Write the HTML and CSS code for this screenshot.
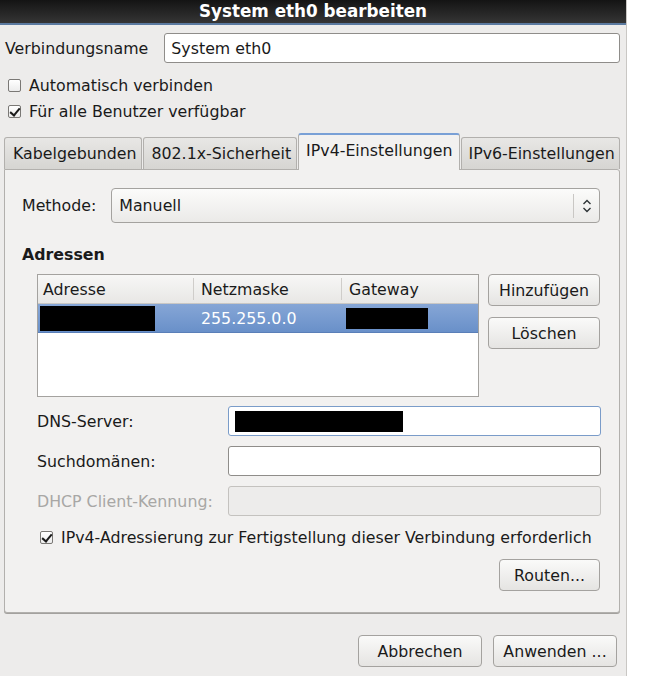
FILE: index.html
```html
<!DOCTYPE html>
<html lang="de">
<head>
    <meta charset="UTF-8">
    <title>System eth0 bearbeiten</title>
    <link rel="stylesheet" href="styles.css">
</head>
<body>
    <div class="dialog">
        <div class="titlebar">System eth0 bearbeiten</div>

        <div class="content">
            <div class="name-row">
                <label for="conn-name">Verbindungsname</label>
                <input type="text" id="conn-name" class="entry" value="System eth0">
            </div>

            <div class="check-row">
                <span class="checkbox"></span>
                <span>Automatisch verbinden</span>
            </div>
            <div class="check-row">
                <span class="checkbox checked"></span>
                <span>Für alle Benutzer verfügbar</span>
            </div>

            <div class="tabs">
                <div class="tab first">Kabelgebunden</div>
                <div class="tab">802.1x-Sicherheit</div>
                <div class="tab active">IPv4-Einstellungen</div>
                <div class="tab">IPv6-Einstellungen</div>
            </div>

            <div class="panel">
                <div class="method-row">
                    <span>Methode:</span>
                    <div class="combo">
                        <span class="combo-text">Manuell</span>
                        <span class="combo-arrow">
                            <svg width="10" height="14" viewBox="0 0 10 14">
                                <path d="M1.5 5 L5 1.5 L8.5 5 M1.5 9 L5 12.5 L8.5 9" fill="none" stroke="#2e3436" stroke-width="1.4"/>
                            </svg>
                        </span>
                    </div>
                </div>

                <div class="section-title">Adressen</div>

                <div class="addr-row">
                    <div class="addr-table">
                        <div class="thead">
                            <div class="col col-addr">Adresse</div>
                            <div class="col col-mask">Netzmaske</div>
                            <div class="col col-gw">Gateway</div>
                        </div>
                        <div class="trow selected">
                            <div class="col col-addr"><span class="redact redact-addr"></span></div>
                            <div class="col col-mask">255.255.0.0</div>
                            <div class="col col-gw"><span class="redact redact-gw"></span></div>
                        </div>
                    </div>
                    <div class="addr-buttons">
                        <button class="btn">Hinzufügen</button>
                        <button class="btn">Löschen</button>
                    </div>
                </div>

                <div class="form-grid">
                    <label>DNS-Server:</label>
                    <div class="entry focus"><span class="redact redact-dns"></span></div>
                    <label>Suchdomänen:</label>
                    <div class="entry"></div>
                    <label class="disabled">DHCP Client-Kennung:</label>
                    <div class="entry disabled"></div>
                </div>

                <div class="check-row require-row">
                    <span class="checkbox checked"></span>
                    <span>IPv4-Adressierung zur Fertigstellung dieser Verbindung erforderlich</span>
                </div>

                <div class="routes-row">
                    <button class="btn btn-routes">Routen...</button>
                </div>
            </div>

            <div class="footer">
                <button class="btn btn-footer">Abbrechen</button>
                <button class="btn btn-footer">Anwenden ...</button>
            </div>
        </div>
    </div>
</body>
</html>
```

FILE: styles.css
```css
body {
    margin: 0;
    background-color: #ffffff;
    font-family: "DejaVu Sans", "Liberation Sans", sans-serif;
    font-size: 15.8px;
    color: #1a1a1a;
}

.dialog {
    width: 626px;
    height: 676px;
    background-color: #edeceb;
    border-right: 1px solid #c9c7c4;
}

.titlebar {
    height: 23px;
    line-height: 23px;
    text-align: center;
    font-size: 16.8px;
    font-weight: bold;
    color: #ffffff;
    background: linear-gradient(#141414, #353535);
    border-bottom: 2px solid #5b7aa0;
}

.content {
    padding: 8px 6px 0 4px;
}

.name-row {
    display: flex;
    align-items: center;
    gap: 16px;
    padding-left: 1px;
}

.entry {
    box-sizing: border-box;
    height: 30px;
    border: 1px solid #8f8d8a;
    border-radius: 3px;
    background-color: #ffffff;
    font: inherit;
    color: inherit;
    padding: 0 6px;
}

.name-row .entry {
    flex: 1;
}

.check-row {
    display: flex;
    align-items: center;
    gap: 8px;
    height: 26px;
    padding-left: 4px;
}

.name-row + .check-row {
    margin-top: 9px;
}

.checkbox {
    box-sizing: border-box;
    width: 13px;
    height: 13px;
    border: 1px solid #7a7875;
    border-radius: 2px;
    background: linear-gradient(#ffffff, #ececec);
    position: relative;
}

.checkbox.checked::after {
    content: "";
    position: absolute;
    left: 3px;
    top: 0;
    width: 4px;
    height: 8px;
    border-right: 2px solid #1a1a1a;
    border-bottom: 2px solid #1a1a1a;
    transform: rotate(40deg);
}

.tabs {
    display: flex;
    align-items: flex-end;
    margin-top: 9px;
    height: 36px;
    width: 616px;
}

.tab {
    box-sizing: border-box;
    height: 32px;
    padding: 0 5px 0 7px;
    display: flex;
    align-items: center;
    white-space: nowrap;
    flex-shrink: 0;
    background: linear-gradient(#e8e7e5, #d6d5d2);
    border: 1px solid #b2b0ad;
    border-bottom: none;
    border-radius: 3px 3px 0 0;
    margin-right: 1px;
}

.tab.first {
    padding: 0 5px 0 8px;
}

.tab:last-child {
    flex: 1;
    flex-shrink: 1;
    margin-right: 0;
    padding: 0 3px 0 6px;
}

.tab.active {
    height: 37px;
    padding: 0 7px 4px 7px;
    background-color: #f2f1f0;
    background-image: none;
    border-top: 2px solid #79a0d6;
    margin-bottom: -1px;
    position: relative;
    z-index: 1;
}

.panel {
    box-sizing: border-box;
    width: 616px;
    height: 444px;
    background-color: #f2f1f0;
    border: 1px solid #b2b0ad;
    border-radius: 0 3px 3px 3px;
    box-shadow: 0 1px 0 #a3a19e;
    padding: 18px 19px 0 17px;
}

.method-row {
    display: flex;
    align-items: center;
    gap: 15px;
}

.combo {
    flex: 1;
    box-sizing: border-box;
    height: 35px;
    display: flex;
    align-items: center;
    border: 1px solid #a4a29f;
    border-radius: 4px;
    background: linear-gradient(#fbfbfa, #ebeae8);
}

.combo-text {
    flex: 1;
    padding-left: 7px;
}

.combo-arrow {
    width: 25px;
    height: 24px;
    border-left: 1px solid #c9c7c4;
    display: flex;
    align-items: center;
    justify-content: center;
}

.section-title {
    font-weight: bold;
    margin-top: 22px;
    margin-bottom: 10px;
}

.addr-row {
    display: flex;
    gap: 9px;
    padding-left: 15px;
}

.addr-table {
    box-sizing: border-box;
    width: 444px;
    height: 123px;
    border: 1px solid #a4a29f;
    background-color: #ffffff;
}

.thead,
.trow {
    display: flex;
    height: 28px;
    align-items: center;
}

.thead {
    background: linear-gradient(#f7f7f6, #e8e7e5);
    border-bottom: 1px solid #c9c7c4;
}

.col {
    box-sizing: border-box;
    height: 100%;
    display: flex;
    align-items: center;
    padding-left: 5px;
}

.col-addr {
    width: 155px;
}

.col-mask {
    width: 148px;
}

.col-gw {
    flex: 1;
}

.thead .col-mask,
.thead .col-gw {
    border-left: 1px solid #cfcdca;
    padding-left: 7px;
}

.thead .col {
    height: 22px;
}

.trow.selected {
    background: linear-gradient(#86a6d6, #6990c9);
    color: #ffffff;
    border-bottom: 1px solid #5a7fb8;
}

.trow.selected .col-mask {
    padding-left: 8px;
}

.redact {
    display: inline-block;
    background-color: #000000;
}

.redact-addr {
    width: 115px;
    height: 25px;
    margin-left: -3px;
}

.redact-gw {
    width: 82px;
    height: 21px;
}

.redact-dns {
    width: 168px;
    height: 21px;
}

.addr-buttons {
    display: flex;
    flex-direction: column;
    gap: 11px;
}

.btn {
    box-sizing: border-box;
    height: 32px;
    font: inherit;
    color: #1a1a1a;
    border: 1px solid #a4a29f;
    border-radius: 4px;
    background: linear-gradient(#fafaf9, #e5e4e2);
    padding: 0 8px;
}

.addr-buttons .btn {
    width: 112px;
}

.form-grid {
    display: grid;
    grid-template-columns: 191px 373px;
    row-gap: 10px;
    align-items: center;
    margin-top: 9px;
    padding-left: 15px;
}

.form-grid .entry {
    height: 30px;
    display: flex;
    align-items: center;
}

.entry.focus {
    border-color: #7a9cc9;
}

.entry.disabled {
    background-color: #edeceb;
    border-color: #c4c2bf;
}

label.disabled {
    color: #a8a7a5;
}

.require-row {
    margin-top: 8px;
    padding-left: 18px;
}

.routes-row {
    display: flex;
    justify-content: flex-end;
    margin-top: 9px;
}

.btn-routes {
    width: 101px;
}

.footer {
    display: flex;
    justify-content: flex-end;
    gap: 11px;
    margin-top: 22px;
    margin-right: 3px;
}

.btn-footer {
    width: 124px;
}
```
